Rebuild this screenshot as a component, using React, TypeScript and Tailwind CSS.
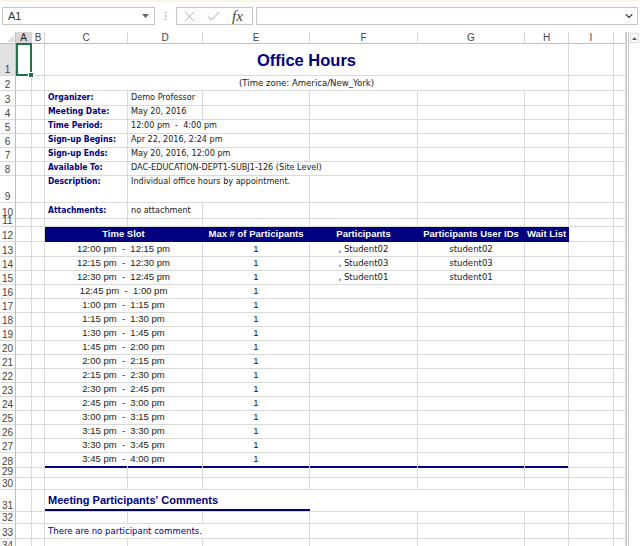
import type { ReactNode } from 'react';
import { X, Check, ChevronDown } from 'lucide-react';
import { twMerge } from 'tailwind-merge';

const grid = 'grid grid-cols-[16px_16px_13px_83px_75px_107px_108px_107px_44px_45px_12px]';
const tah = "font-['DejaVu_Sans','Liberation_Sans',sans-serif] font-stretch-condensed";
const ari = "font-['Liberation_Sans',Arial,sans-serif]";

const spans: Record<number, string> = { 1: '', 2: 'col-span-2', 3: 'col-span-3', 6: 'col-span-6' };

const slots = [
  '12:00 pm  -  12:15 pm',
  '12:15 pm  -  12:30 pm',
  '12:30 pm  -  12:45 pm',
  '12:45 pm  -  1:00 pm',
  '1:00 pm  -  1:15 pm',
  '1:15 pm  -  1:30 pm',
  '1:30 pm  -  1:45 pm',
  '1:45 pm  -  2:00 pm',
  '2:00 pm  -  2:15 pm',
  '2:15 pm  -  2:30 pm',
  '2:30 pm  -  2:45 pm',
  '2:45 pm  -  3:00 pm',
  '3:00 pm  -  3:15 pm',
  '3:15 pm  -  3:30 pm',
  '3:30 pm  -  3:45 pm',
  '3:45 pm  -  4:00 pm',
];

const people = [
  { name: ', Student02', id: 'student02' },
  { name: ', Student03', id: 'student03' },
  { name: ', Student01', id: 'student01' },
];

function Cell({ span = 1, className = '', children }: { span?: number; className?: string; children?: ReactNode }) {
  return (
    <div className={twMerge('flex items-center whitespace-nowrap min-w-0 border-r border-b border-[#dadada]', spans[span], className)}>
      {children}
    </div>
  );
}

function Blank({ count }: { count: number }) {
  return (
    <>
      {Array.from({ length: count }, (_, i) => (
        <Cell key={i} />
      ))}
    </>
  );
}

function Row({ n, h, sel = false, children }: { n: number; h: string; sel?: boolean; children?: ReactNode }) {
  return (
    <div className={twMerge(grid, h)}>
      <div
        className={twMerge(
          'flex items-end justify-center overflow-hidden pb-[1px] border-r border-b border-[#dadada] border-r-[#bfbfbf] text-[10px] leading-[9px] text-[#444]',
          ari,
          sel && 'bg-[#e1e1e1]',
        )}
      >
        {n}
      </div>
      {children}
    </div>
  );
}

function Info({ n, h = 'h-[14px]', label, value, span = 1 }: { n: number; h?: string; label: string; value: string; span?: number }) {
  return (
    <Row n={n} h={h}>
      <Blank count={2} />
      <Cell className={twMerge('items-start pt-[1px] pl-[3px] font-bold text-[8.5px] text-[#000080]', tah)}>{label}</Cell>
      <Cell span={span} className={twMerge('items-start pt-[1px] pl-[3px] text-[9px] text-[#1a1a1a] whitespace-pre', tah)}>
        {value}
      </Cell>
      <Blank count={7 - span} />
    </Row>
  );
}

function Empty({ n, h = 'h-[14px]' }: { n: number; h?: string }) {
  return (
    <Row n={n} h={h}>
      <Blank count={10} />
    </Row>
  );
}

export default function App() {
  const hdr = twMerge('bg-[#000080] border-[#000080] justify-center text-white font-bold text-[9.5px]', ari);
  const letters = ['A', 'B', 'C', 'D', 'E', 'F', 'G', 'H', 'I', ''];

  return (
    <div className="w-[640px] h-[546px] overflow-hidden bg-white">
      {/* formula bar */}
      <div className="h-[32px] border-t-2 border-[#fbf5e6] flex items-start pt-[5px]">
        <div className={twMerge('ml-[2px] w-[153px] h-[18px] border border-[#c6c6c6] flex items-center justify-between pl-[5px] pr-[5px] text-[11px] text-[#333]', ari)}>
          <span>A1</span>
          <svg width="7" height="4" viewBox="0 0 7 4">
            <path d="M0 0h7L3.5 4z" fill="#666" />
          </svg>
        </div>
        <div className="w-[21px] h-[18px] flex items-center justify-center">
          <svg width="3" height="10" viewBox="0 0 3 10">
            <circle cx="1.5" cy="1.5" r="0.8" fill="#999" />
            <circle cx="1.5" cy="5" r="0.8" fill="#999" />
            <circle cx="1.5" cy="8.5" r="0.8" fill="#999" />
          </svg>
        </div>
        <div className="w-[77px] h-[18px] border border-[#c6c6c6] flex items-center pl-[4px] gap-[7px]">
          <X size={17} strokeWidth={1.1} className="text-[#a0a0a0]" />
          <Check size={17} strokeWidth={1.3} className="text-[#a0a0a0]" />
          <span className="font-['Liberation_Serif',serif] italic text-[15px] leading-none text-[#444] ml-[3px]">fx</span>
        </div>
        <div className="ml-[3px] mr-[2px] flex-1 h-[18px] border border-[#c6c6c6] flex items-center justify-end pr-[2px]">
          <ChevronDown size={12} strokeWidth={2.2} className="text-[#444]" />
        </div>
      </div>

      <div className="flex">
        <div className="w-[626px]">
          {/* column headers */}
          <div className={twMerge(grid, 'h-[12px]')}>
            <div className="relative border-r border-b border-[#bfbfbf]">
              <svg width="7" height="7" viewBox="0 0 7 7" className="absolute right-[1px] bottom-[1px]">
                <path d="M7 0v7H0z" fill="#dcdcdc" />
              </svg>
            </div>
            {letters.map((l, i) => (
              <div
                key={i}
                className={twMerge(
                  'flex items-center justify-center border-r border-b border-[#d5d5d5] border-b-[#bfbfbf] text-[10px] leading-none text-[#444]',
                  ari,
                  l === 'A' && 'bg-[#d6d6d6] text-[#222]',
                )}
              >
                {l}
              </div>
            ))}
          </div>

          <Row n={1} h="h-[32px]" sel>
            <Cell className="relative">
              <div className="absolute left-0 -top-[1px] w-[16px] h-[33px] border-2 border-[#217346] z-10">
                <div className="absolute -right-[4px] -bottom-[4px] w-[6px] h-[6px] bg-[#217346] border border-white" />
              </div>
            </Cell>
            <Cell />
            <Cell span={6} className={twMerge('justify-center font-bold text-[16.5px] text-[#000080] pt-[2px]', ari)}>
              Office Hours
            </Cell>
            <Blank count={2} />
          </Row>

          <Row n={2} h="h-[14px]">
            <Blank count={2} />
            <Cell span={6} className={twMerge('justify-center text-[9.5px] text-[#1a1a1a]', tah)}>
              (Time zone: America/New_York)
            </Cell>
            <Blank count={2} />
          </Row>

          <Info n={3} label="Organizer:" value="Demo Professor" />
          <Info n={4} label="Meeting Date:" value="May 20, 2016" />
          <Info n={5} label="Time Period:" value="12:00 pm  -  4:00 pm" span={2} />
          <Info n={6} label="Sign-up Begins:" value="Apr 22, 2016, 2:24 pm" span={2} />
          <Info n={7} label="Sign-up Ends:" value="May 20, 2016, 12:00 pm" span={2} />
          <Info n={8} label="Available To:" value="DAC-EDUCATION-DEPT1-SUBJ1-126 (Site Level)" span={3} />
          <Info n={9} h="h-[29px]" label="Description:" value="Individual office hours by appointment." span={2} />
          <Info n={10} h="h-[13px]" label="Attachments:" value="no attachment" />
          <Empty n={11} h="h-[11px]" />

          <Row n={12} h="h-[15px]">
            <Blank count={2} />
            <Cell span={2} className={hdr}>Time Slot</Cell>
            <Cell className={hdr}>Max # of Participants</Cell>
            <Cell className={hdr}>Participants</Cell>
            <Cell className={hdr}>Participants User IDs</Cell>
            <Cell className={hdr}>Wait List</Cell>
            <Blank count={2} />
          </Row>

          {slots.map((s, i) => {
            const last = i === slots.length - 1 ? 'border-b-2 border-b-[#000080]' : '';
            const p = people[i];
            return (
              <Row key={s} n={13 + i} h="h-[14px]">
                <Blank count={2} />
                <Cell span={2} className={twMerge('justify-center whitespace-pre text-[9.5px] text-[#1a1a1a]', ari, last)}>
                  {s}
                </Cell>
                <Cell className={twMerge('justify-center text-[9.5px] text-[#1a1a1a]', ari, last)}>1</Cell>
                <Cell className={twMerge('justify-center text-[9.5px] text-[#1a1a1a]', tah, last)}>{p?.name}</Cell>
                <Cell className={twMerge('justify-center text-[9.5px] text-[#1a1a1a]', tah, last)}>{p?.id}</Cell>
                <Cell className={last} />
                <Blank count={2} />
              </Row>
            );
          })}

          <Empty n={29} h="h-[12px]" />
          <Empty n={30} h="h-[12px]" />

          <Row n={31} h="h-[22px]">
            <Blank count={2} />
            <Cell span={6} className="flex-col items-start">
              <div className={twMerge('flex-1 flex items-center pl-[3px] pt-[2px] font-bold text-[11px] text-[#000080]', ari)}>
                Meeting Participants' Comments
              </div>
              <div className="w-[265px] h-[2px] bg-[#000080]" />
            </Cell>
            <Blank count={2} />
          </Row>

          <Empty n={32} h="h-[12px]" />

          <Row n={33} h="h-[14px]">
            <Blank count={2} />
            <Cell span={3} className={twMerge('pl-[3px] text-[9.5px] text-[#000080]', tah)}>
              There are no participant comments.
            </Cell>
            <Blank count={5} />
          </Row>

          <Empty n={34} h="h-[14px]" />
        </div>

        {/* vertical scrollbar */}
        <div className="w-[14px] h-[514px] border-l-[3px] border-double border-[#c8c8c8] bg-white">
          <div className="mx-[1px] mt-[1px] h-[10px] border border-[#dcdcdc] flex items-center justify-center">
            <svg width="5" height="3" viewBox="0 0 5 3">
              <path d="M0 3h5L2.5 0z" fill="#606060" />
            </svg>
          </div>
        </div>
      </div>
    </div>
  );
}
